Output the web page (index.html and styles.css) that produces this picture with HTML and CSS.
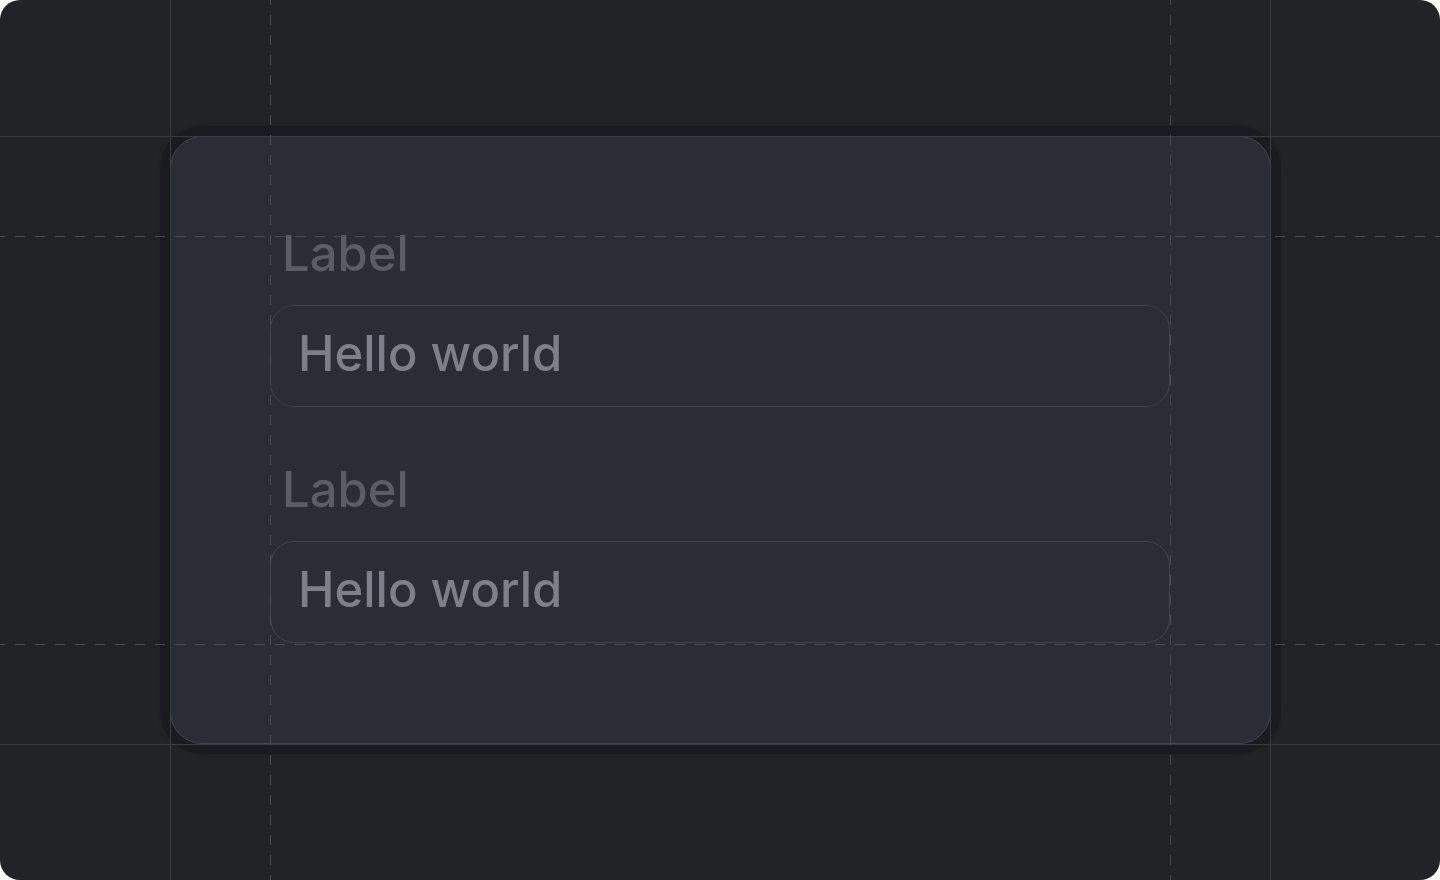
FILE: index.html
```html
<!DOCTYPE html>
<html lang="en">
<head>
<meta charset="utf-8">
<title>Text box trim</title>
<link rel="stylesheet" href="styles.css">
</head>
<body>
<div class="canvas">
  <div class="card">
    <div class="field">
      <label class="label">Label</label>
      <div class="input">Hello world</div>
    </div>
    <div class="field">
      <label class="label">Label</label>
      <div class="input">Hello world</div>
    </div>
  </div>
  <div class="guide v solid g-x170"></div>
  <div class="guide v solid g-x1270"></div>
  <div class="guide h solid g-y136"></div>
  <div class="guide h solid g-y744"></div>
  <div class="guide v dashed g-x270"></div>
  <div class="guide v dashed g-x1170"></div>
  <div class="guide h dashed g-y236"></div>
  <div class="guide h dashed g-y644"></div>
</div>
</body>
</html>
```
FILE: styles.css
```css
html, body {
  margin: 0;
  padding: 0;
  background: #ffffff;
}
body {
  font-family: Inter, "Liberation Sans", sans-serif;
}
.canvas {
  position: relative;
  width: 1440px;
  height: 880px;
  background: #222327;
  border-radius: 20px;
  overflow: hidden;
  padding: 136px 169px 0 170px;
  box-sizing: border-box;
}
.card {
  width: 1101px;
  box-sizing: border-box;
  background: #2a2d35;
  border: 1px solid #42454d;
  border-radius: 32px;
  padding: 99px 100px 100px 99px;
  box-shadow: 0 0 0 10px rgba(20, 20, 24, 0.35), 0 0 4px 10px rgba(20, 20, 24, 0.2);
  display: flex;
  flex-direction: column;
  gap: 65px;
}
.field {
  display: flex;
  flex-direction: column;
  gap: 33px;
}
.label {
  display: block;
  height: 36px;
  font-size: 49px;
  font-weight: 500;
  line-height: 36px;
  color: #5a5d67;
  padding-left: 12px;
}
.input {
  height: 102px;
  box-sizing: border-box;
  border: 1px solid #40434b;
  border-radius: 24px;
  font-size: 49px;
  font-weight: 500;
  line-height: 95px;
  padding-left: 27px;
  color: #7d808a;
}
.guide {
  position: absolute;
  pointer-events: none;
}
.guide.v {
  top: 0;
  bottom: 0;
  width: 1px;
}
.guide.h {
  left: 0;
  right: 0;
  height: 1px;
}
.guide.solid {
  background: #393b41;
}
.guide.v.dashed {
  background: repeating-linear-gradient(to bottom, #484c54 0 5px, transparent 5px 15px, #484c54 15px 20px);
}
.guide.h.dashed {
  background: repeating-linear-gradient(to right, #484c54 0 5px, transparent 5px 15px, #484c54 15px 20px);
}
.g-x170 { left: 170px; }
.g-x1270 { left: 1270px; }
.g-x270 { left: 270px; }
.g-x1170 { left: 1170px; }
.g-y136 { top: 136px; }
.g-y744 { top: 744px; }
.g-y236 { top: 236px; }
.g-y644 { top: 644px; }
```
